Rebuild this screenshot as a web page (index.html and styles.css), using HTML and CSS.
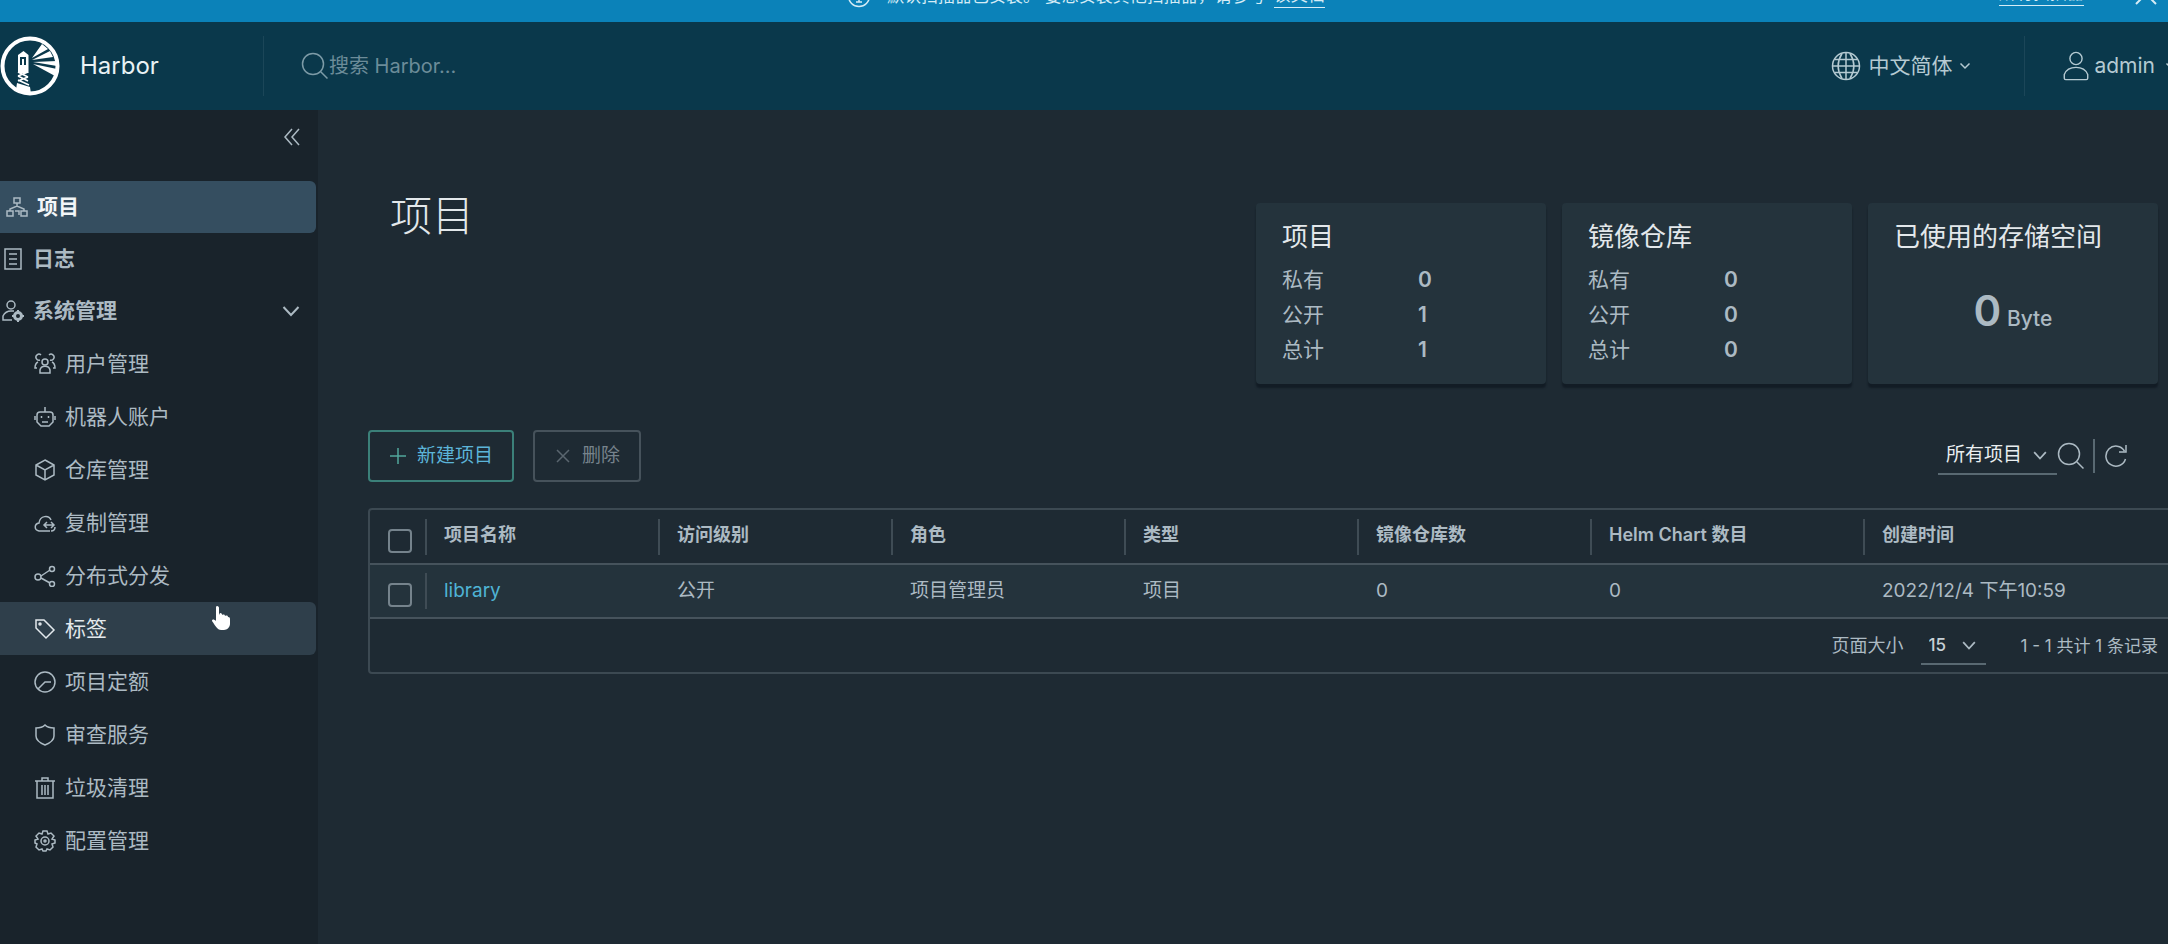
FILE: index.html
```html
<!DOCTYPE html>
<html lang="zh-CN">
<head>
<meta charset="utf-8">
<title>Harbor</title>
<link rel="stylesheet" href="styles.css">
</head>
<body>
<div class="app">
  <div class="banner">
    <div class="banner-message">
      <svg class="icon banner-icon" viewBox="0 0 24 24"><circle cx="12" cy="12" r="10.500"/><path d="M12 6v1.500M12 10v8M9 18h6"/></svg>
      <span>默认扫描器已安装。 要想安装其他扫描器，请参考</span>
      <a class="banner-link" href="#">该文档</a>
    </div>
    <div class="banner-side">
      <a class="banner-link" href="#">所有扫描器</a>
      <button class="plain" type="button" aria-label="关闭"><svg class="icon close-icon" viewBox="0 0 24 24"><path d="M2 2l20 20M22 2L2 22"/></svg></button>
    </div>
  </div>

  <header class="header">
    <a class="brand" href="#">
      <svg class="logo" viewBox="0 0 60 60">
        <circle cx="30" cy="30" r="27.500" fill="none" stroke="#fff" stroke-width="4"/>
        <path fill="#fff" d="M18 24v-5l5.500-4 5 4v18h-10.500z"/>
        <path fill="#0a384b" d="M20 21h6v8h-6z"/><path fill="#fff" d="M22 23h2v6h-2z"/>
        <path fill="none" stroke="#fff" stroke-width="1.600" d="M18 36l10 5M18 40l10 5M18 44l11 5M28 36l-10 4M28 41l-10 4"/>
        <path fill="#fff" d="M17 47l13 4 1 7c-5 1-11-1-15-4z"/>
        <path fill="#fff" d="M32 22l10-14 6 5zM32 24l18-9 3 6zM33 26l24-1v5zM33 28l24 5-2 7z"/>
      </svg>
      <span>Harbor</span>
    </a>
    <label class="search">
      <svg class="icon search-icon" viewBox="0 0 28 28"><circle cx="12" cy="12" r="10.500"/><path d="M19.500 19.500l7 7"/></svg>
      <input class="search-input" type="search" placeholder="搜索 Harbor..." aria-label="搜索 Harbor">
    </label>
    <button class="plain language" type="button">
      <svg class="icon globe-icon" viewBox="0 0 30 30"><circle cx="15" cy="15" r="13.500"/><path d="M15 1.500v27M1.500 15h27M4 8.500h22M4 21.500h22M11 2.500c-5 8-5 17 0 25M19 2.500c5 8 5 17 0 25"/></svg>
      <span>中文简体</span>
      <svg class="icon caret" viewBox="0 0 12 12"><path d="M1.500 3.500L6 8l4.500-4.500"/></svg>
    </button>
    <button class="plain account" type="button">
      <svg class="icon user-icon" viewBox="0 0 28 32"><circle cx="14" cy="8" r="6.500"/><path d="M1.500 29v-4c2-5 7-7.500 12.500-7.500S24.500 20 26.500 25v4c0 1-.5 1.500-1.500 1.500H3c-1 0-1.500-.5-1.500-1.500z"/></svg>
      <span>admin</span>
      <svg class="icon caret" viewBox="0 0 12 12"><path d="M1.500 3.500L6 8l4.500-4.500"/></svg>
    </button>
  </header>

  <div class="body">
    <nav class="sidebar">
      <div class="collapse">
        <button class="plain" type="button" aria-label="收起"><svg class="icon collapse-icon" viewBox="0 0 18 18"><path d="M9 1L2 9l7 8M16 1L9 9l7 8"/></svg></button>
      </div>
      <ul class="menu">
        <li><a class="item active" href="#"><svg class="icon" viewBox="0 0 22 22"><path d="M8 2h6v5H8zM1 15h6v5H1zM15 15h6v5h-6zM11 7v4M4 15v-2l7-3 7 3v2M9 15h4v4"/></svg><span>项目</span></a></li>
        <li><a class="item" href="#"><svg class="icon" viewBox="0 0 22 22"><path d="M3 1h16v20H3zM7 6h8M7 11h8M7 16h8"/></svg><span>日志</span></a></li>
        <li><button class="plain item group" type="button" aria-expanded="true"><svg class="icon" viewBox="0 0 22 22"><circle cx="9" cy="5" r="4"/><path d="M10 20H1v-4c2-4 5-5 8-5h3"/><circle cx="16" cy="16" r="3.500" stroke-width="3"/><path d="M16 10v2M16 20v2M10 16h2M20 16h2" stroke-width="2"/></svg><span>系统管理</span><svg class="icon chevron" viewBox="0 0 18 18"><path d="M1.500 5L9 13l7.500-8"/></svg></button></li>
      </ul>
      <ul class="menu submenu">
        <li><a class="item" href="#"><svg class="icon" viewBox="0 0 22 22"><circle cx="11" cy="9" r="3"/><path d="M6 20v-3c1-5 9-5 10 0v3zM7 2a3 3 0 1 0-1 5M15 2a3 3 0 1 1 1 5M4 9c-2 1-3 3-3 6h2M18 9c2 1 3 3 3 6h-2"/></svg><span>用户管理</span></a></li>
        <li><a class="item" href="#"><svg class="icon" viewBox="0 0 22 22"><path d="M3 9c0-2 1-3 3-3h10c2 0 3 1 3 3v7l-4 4H7l-4-4zM11 1v5M1 10v4M21 10v4M7.500 10v2M14.500 10v2M8 16h6"/></svg><span>机器人账户</span></a></li>
        <li><a class="item" href="#"><svg class="icon" viewBox="0 0 22 22"><path d="M11 1l9 5v10l-9 5-9-5V6zM2 6l9 5 9-5M11 11v10"/></svg><span>仓库管理</span></a></li>
        <li><a class="item" href="#"><svg class="icon" viewBox="0 0 22 22"><path d="M16 19H5c-5-1-5-7 0-8 1-8 10-8 12-3M17 19c3 0 4-2 4-4M10 13h10M17 10l3 3-3 3M13 10l-3 3 3 3"/></svg><span>复制管理</span></a></li>
        <li><a class="item" href="#"><svg class="icon" viewBox="0 0 22 22"><circle cx="4" cy="12" r="3"/><circle cx="18" cy="4" r="2.500"/><circle cx="18" cy="19" r="2.500"/><path d="M7 11l9-6M7 13l9 5"/></svg><span>分布式分发</span></a></li>
        <li><a class="item hover" href="#"><svg class="icon" viewBox="0 0 22 22"><path d="M2 2h8l10 10-8 8L2 10z"/><circle cx="6" cy="6" r="1"/></svg><span>标签</span></a>
          <svg class="pointer" viewBox="0 0 20 26"><path fill="#fff" d="M6 1c1.500 0 2 1 2 2v7l1-2c2 0 2 1 2 2 2-1 3 0 3 1 2-1 3 0 3 1 2 0 2 1 2 3v4c0 3-3 6-6 6h-3c-3 0-5-3-9-9 0-2 2-2 4 0V3c0-1 0-2 1-2z"/></svg></li>
        <li><a class="item" href="#"><svg class="icon" viewBox="0 0 22 22"><circle cx="11" cy="11" r="10"/><path d="M4 18l7-7h6M11 11l-3 3"/></svg><span>项目定额</span></a></li>
        <li><a class="item" href="#"><svg class="icon" viewBox="0 0 22 22"><path d="M11 1c2 2 5 3 9 3v8c0 4-4 7-9 9-5-2-9-5-9-9V4c4 0 7-1 9-3z"/></svg><span>审查服务</span></a></li>
        <li><a class="item" href="#"><svg class="icon" viewBox="0 0 22 22"><path d="M1 4h20M8 4V1h6v3M3 4v17h16V4M8 8v10M11 8v10M14 8v10"/></svg><span>垃圾清理</span></a></li>
        <li><a class="item" href="#"><svg class="icon" viewBox="0 0 22 22"><path d="M9 1h4l1 3 3-1 3 3-2 3 3 1v3l-3 1 1 3-3 3-3-1-1 2H9l-1-2-3 1-3-3 1-3-2-1v-3l3-1-2-3 3-3 3 1z"/><circle cx="11" cy="11" r="4"/><circle cx="11" cy="11" r="1"/></svg><span>配置管理</span></a></li>
      </ul>
    </nav>

    <main class="main">
      <div class="summary">
        <h1 class="title">项目</h1>
        <section class="card">
          <h2 class="card-title">项目</h2>
          <dl class="stats"><dt>私有</dt><dd>0</dd><dt>公开</dt><dd>1</dd><dt>总计</dt><dd>1</dd></dl>
        </section>
        <section class="card">
          <h2 class="card-title">镜像仓库</h2>
          <dl class="stats"><dt>私有</dt><dd>0</dd><dt>公开</dt><dd>0</dd><dt>总计</dt><dd>0</dd></dl>
        </section>
        <section class="card">
          <h2 class="card-title">已使用的存储空间</h2>
          <p class="storage"><span class="storage-value">0</span> Byte</p>
        </section>
      </div>

      <div class="toolbar">
        <button class="btn primary" type="button"><svg class="icon" viewBox="0 0 18 18"><path d="M9 1v16M1 9h16"/></svg><span>新建项目</span></button>
        <button class="btn" type="button" disabled><svg class="icon" viewBox="0 0 18 18"><path d="M3 3l12 12M15 3L3 15"/></svg><span>删除</span></button>
        <div class="filters">
          <div class="select-box">
            <select class="select filter-select" aria-label="项目类型"><option>所有项目</option></select>
            <svg class="icon select-caret" viewBox="0 0 12 12"><path d="M1 3.500L6 9l5-5.500"/></svg>
          </div>
          <button class="plain" type="button" aria-label="搜索"><svg class="icon search-icon" viewBox="0 0 28 28"><circle cx="12" cy="12" r="10.500"/><path d="M19.500 19.500l7 7"/></svg></button>
          <button class="plain refresh" type="button" aria-label="刷新"><svg class="icon refresh-icon" viewBox="0 0 24 24"><path d="M21.500 15a10 10 0 1 1-1-8M22 1v7h-7"/></svg></button>
        </div>
      </div>

      <div class="grid">
        <table class="table">
          <colgroup><col class="col-check"><col class="col"><col class="col"><col class="col"><col class="col"><col class="col"><col class="col-wide"><col></colgroup>
          <thead>
            <tr>
              <th class="check"><input class="checkbox" type="checkbox" aria-label="全选"></th>
              <th><span class="cell ruled">项目名称</span></th>
              <th><span class="cell ruled">访问级别</span></th>
              <th><span class="cell ruled">角色</span></th>
              <th><span class="cell ruled">类型</span></th>
              <th><span class="cell ruled">镜像仓库数</span></th>
              <th><span class="cell ruled">Helm Chart 数目</span></th>
              <th><span class="cell ruled">创建时间</span></th>
            </tr>
          </thead>
          <tbody>
            <tr>
              <td class="check"><input class="checkbox" type="checkbox" aria-label="选择 library"></td>
              <td><span class="cell ruled"><a class="link" href="#">library</a></span></td>
              <td><span class="cell">公开</span></td>
              <td><span class="cell">项目管理员</span></td>
              <td><span class="cell">项目</span></td>
              <td><span class="cell">0</span></td>
              <td><span class="cell">0</span></td>
              <td><span class="cell">2022/12/4 下午10:59</span></td>
            </tr>
          </tbody>
        </table>
        <div class="pagination">
          <label class="page-label" for="page-size">页面大小</label>
          <div class="select-box page-size">
            <select class="select" id="page-size"><option>15</option></select>
            <svg class="icon select-caret" viewBox="0 0 12 12"><path d="M1 3.500L6 9l5-5.500"/></svg>
          </div>
          <span>1 - 1 共计 1 条记录</span>
        </div>
      </div>
    </main>
  </div>
</div>
</body>
</html>
```
FILE: styles.css
```css
* {
  box-sizing: border-box;
}

body {
  margin: 0;
  overflow: hidden;
  background: #1e2a33;
  color: #acbac3;
  font-family: Inter, "Noto Sans CJK SC", sans-serif;
  font-size: 19px;
  line-height: 24px;
}

h1, h2, p, dl, dd, ul {
  margin: 0;
  padding: 0;
  font-weight: 400;
}

ul {
  list-style: none;
}

a {
  color: inherit;
  text-decoration: none;
}

.plain {
  display: flex;
  align-items: center;
  padding: 0;
  border: 0;
  background: none;
  color: inherit;
  font: inherit;
}

.icon {
  flex: none;
  width: 22px;
  height: 22px;
  fill: none;
  stroke: currentColor;
  stroke-width: 1.5;
}

.app {
  display: flex;
  flex-direction: column;
  min-height: 100vh;
}

.banner {
  display: flex;
  align-items: flex-end;
  height: 22px;
  padding: 0 10px 0 847px;
  overflow: hidden;
  background: #0b82b9;
  color: #d5ecf6;
  font-size: 17px;
}

.banner-message {
  display: flex;
  flex: 1;
  align-items: center;
  gap: 8px;
  padding-bottom: 14px;
}

.banner-icon {
  width: 24px;
  height: 24px;
  margin-right: 8px;
}

.banner-link {
  border-bottom: 1px solid;
}

.banner-side {
  display: flex;
  align-items: center;
  gap: 50px;
  padding-bottom: 16px;
}

.close-icon {
  width: 24px;
  height: 24px;
  stroke-width: 2;
}

.header {
  display: flex;
  align-items: center;
  height: 88px;
  overflow: hidden;
  background: #0a384b;
  color: #b5cad2;
  font-size: 21px;
}

.brand {
  display: flex;
  align-items: center;
  gap: 20px;
  width: 264px;
  height: 60px;
  border-right: 1px solid #1b4658;
  color: #e9f2f5;
  font-size: 24px;
}

.logo {
  width: 60px;
  height: 60px;
}

.search {
  display: flex;
  flex: 1;
  align-items: center;
  padding-left: 37px;
  color: #7d9ba7;
  font-size: 20px;
}

.search-icon {
  width: 28px;
  height: 28px;
}

.search-input {
  width: 300px;
  padding: 0;
  border: 0;
  outline: 0;
  background: none;
  color: inherit;
  font: inherit;
}

.search-input::placeholder {
  color: #6c8c99;
}

.language {
  gap: 7px;
  height: 60px;
  padding-right: 53px;
  border-right: 1px solid #1b4658;
}

.globe-icon {
  width: 30px;
  height: 30px;
}

.caret {
  width: 12px;
  height: 12px;
}

.account {
  gap: 4px;
  margin-right: -9px;
  padding-left: 37px;
}

.account .caret {
  margin-left: 6px;
}

.user-icon {
  width: 28px;
  height: 30px;
}

.body {
  display: flex;
  flex: 1;
}

.sidebar {
  flex: none;
  width: 318px;
  background: #19232b;
  font-size: 21px;
}

.collapse {
  display: flex;
  justify-content: flex-end;
  height: 71px;
  padding: 18px 17px 0 0;
}

.collapse .plain {
  height: 18px;
}

.collapse-icon {
  width: 18px;
  height: 18px;
}

.item {
  display: flex;
  align-items: center;
  gap: 9px;
  width: 316px;
  height: 52px;
  padding: 0 16px 0 2px;
  border-radius: 0 6px 6px 0;
  font-weight: 700;
}

.active {
  background: #354e60;
  color: #f2f6f8;
}

.active .icon {
  color: #acbac3;
  margin-left: 4px;
}

.group .chevron {
  width: 18px;
  height: 18px;
  margin-left: auto;
  stroke-width: 2;
}

.submenu li {
  position: relative;
}

.submenu .item {
  height: 53px;
  padding-left: 34px;
  font-weight: 400;
}

.submenu .hover {
  background: #2f3f4b;
  color: #e3e9ed;
}

.pointer {
  position: absolute;
  top: 3px;
  left: 211px;
  width: 20px;
  height: 26px;
}

.main {
  flex: 1;
  min-width: 0;
  padding: 93px 10px 0 50px;
}

.summary {
  display: flex;
  gap: 16px;
}

.title {
  flex: 1;
  padding-left: 22px;
  color: #e3e8eb;
  font-size: 42px;
  font-weight: 300;
  line-height: 26px;
}

.card {
  width: 290px;
  height: 181px;
  padding: 20px 26px;
  border-radius: 4px;
  background: #24333c;
  box-shadow: 0 4px 2px #121c25;
}

.card-title {
  color: #e3e8eb;
  font-size: 26px;
  line-height: 28px;
  white-space: nowrap;
}

.stats {
  display: grid;
  grid-template-columns: 136px 1fr;
  padding-top: 11px;
  font-size: 21px;
  line-height: 35px;
}

.stats dd {
  font-weight: 600;
}

.storage {
  padding-top: 36px;
  font-size: 21px;
  font-weight: 500;
  line-height: 48px;
  text-align: center;
}

.storage-value {
  font-size: 42px;
  font-weight: 600;
}

.toolbar {
  display: flex;
  align-items: center;
  gap: 19px;
  padding-top: 46px;
}

.btn {
  display: flex;
  align-items: center;
  gap: 10px;
  height: 52px;
  padding: 0 19px;
  border: 2px solid #46525b;
  border-radius: 4px;
  background: none;
  color: #77838c;
  font: inherit;
}

.btn .icon {
  width: 18px;
  height: 18px;
}

.btn:disabled .icon {
  color: #5a666f;
}

.primary {
  border-color: #3b8079;
  color: #5cb4d8;
}

.primary .icon {
  color: #52a79c;
}

.filters {
  display: flex;
  align-items: center;
  margin-left: auto;
  padding-right: 30px;
}

.select-box {
  position: relative;
  border-bottom: 2px solid #596972;
}

.select {
  width: 100%;
  height: 36px;
  padding: 0 8px;
  border: 0;
  appearance: none;
  background: none;
  color: #c6d0d6;
  font: inherit;
}

.filter-select {
  width: 119px;
  color: #e9eef0;
}

.select-caret {
  position: absolute;
  top: 11px;
  right: 10px;
  width: 14px;
  height: 14px;
  pointer-events: none;
}

.refresh {
  height: 34px;
  margin-left: 8px;
  padding-left: 9px;
  border-left: 2px solid #596972;
}

.refresh-icon {
  width: 24px;
  height: 24px;
}

.grid {
  margin: 26px -24px 0 0;
  border: 2px solid #3c4952;
  border-radius: 4px;
}

.table {
  width: 100%;
  border-collapse: collapse;
  table-layout: fixed;
}

.col-check {
  width: 55px;
}

.col {
  width: 233px;
}

.col-wide {
  width: 273px;
}

.table th,
.table td {
  height: 54px;
  padding: 0;
  border-bottom: 2px solid #46535c;
  text-align: left;
  white-space: nowrap;
}

.table th {
  font-size: 18px;
  font-weight: 600;
}

.table th .cell {
  padding-bottom: 4px;
}

.table tbody tr {
  background: #24333c;
}

.table .check {
  padding: 8px 0 0 18px;
}

.checkbox {
  display: block;
  width: 24px;
  height: 24px;
  margin: 0;
  border: 2px solid #75838c;
  border-radius: 4px;
  appearance: none;
}

.cell {
  display: flex;
  align-items: center;
  height: 36px;
  padding-left: 19px;
}

.cell.ruled {
  padding-left: 17px;
  border-left: 2px solid #3f4c55;
}

.link {
  color: #4fb3d5;
}

.pagination {
  display: flex;
  align-items: center;
  justify-content: flex-end;
  gap: 17px;
  height: 53px;
  padding-right: 22px;
  font-size: 17px;
}

.page-label {
  font-size: 18px;
}

.page-size {
  width: 65px;
  margin-right: 18px;
  font-weight: 500;
}
```
